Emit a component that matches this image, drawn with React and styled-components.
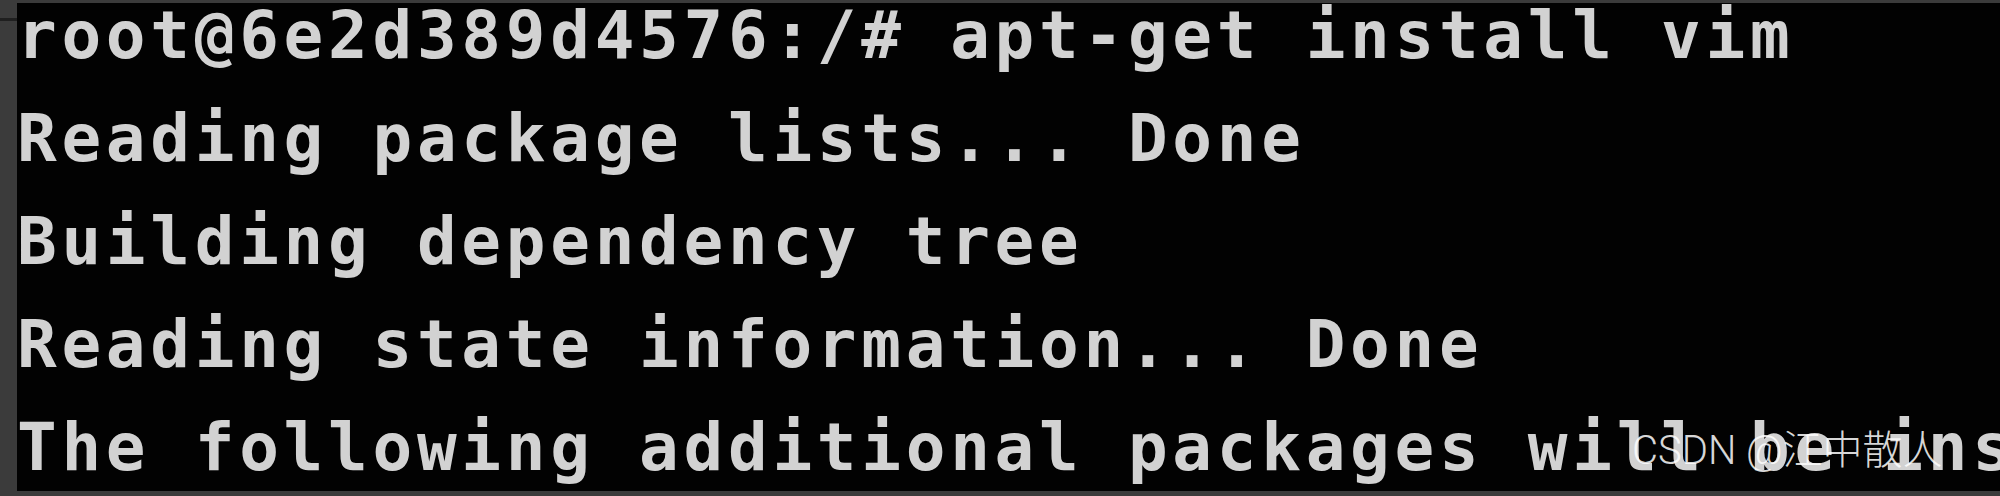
import React from "react";
import styled, { createGlobalStyle } from "styled-components";

const Global = createGlobalStyle`
  html, body { margin: 0; padding: 0; background: #3b3b3b; }
  #root { width: 2000px; height: 496px; }
`;

const Frame = styled.div`
  display: flex;
  width: 2000px;
  height: 496px;
  box-sizing: border-box;
  padding: 3px 0 5px 0;
  background: #3b3b3b;
  overflow: hidden;
`;

const Gutter = styled.div`
  position: relative;
  flex: 0 0 17px;
  margin-top: -3px;
  &::before {
    content: "";
    position: absolute;
    left: 0;
    right: 0;
    top: 18px;
    height: 3px;
    background: #1f1f1f;
  }
`;

const Screen = styled.div`
  position: relative;
  flex: 1;
  background: #020202;
  overflow: hidden;
`;

const Lines = styled.div`
  margin-top: -19px;
  display: flex;
  flex-direction: column;
`;

const Line = styled.div`
  font-family: "DejaVu Sans Mono", "Liberation Mono", monospace;
  font-weight: bold;
  font-size: 66px;
  line-height: 103px;
  letter-spacing: 4.7px;
  color: #d2d2d2;
  white-space: pre;
`;

const Watermark = styled.div`
  position: absolute;
  left: 1615px;
  top: 424px;
  font-family: Roboto, "Noto Sans CJK SC", sans-serif;
  font-weight: 300;
  font-size: 40px;
  line-height: 48px;
  color: rgba(255, 255, 255, 0.85);
  white-space: nowrap;
`;

const lines = [
  "root@6e2d389d4576:/# apt-get install vim",
  "Reading package lists... Done",
  "Building dependency tree",
  "Reading state information... Done",
  "The following additional packages will be installed:",
];

export default function App() {
  return (
    <>
      <Global />
      <Frame>
        <Gutter />
        <Screen>
          <Lines>
            {lines.map((l, i) => (
              <Line key={i}>{l}</Line>
            ))}
          </Lines>
          <Watermark>CSDN @江中散人</Watermark>
        </Screen>
      </Frame>
    </>
  );
}
